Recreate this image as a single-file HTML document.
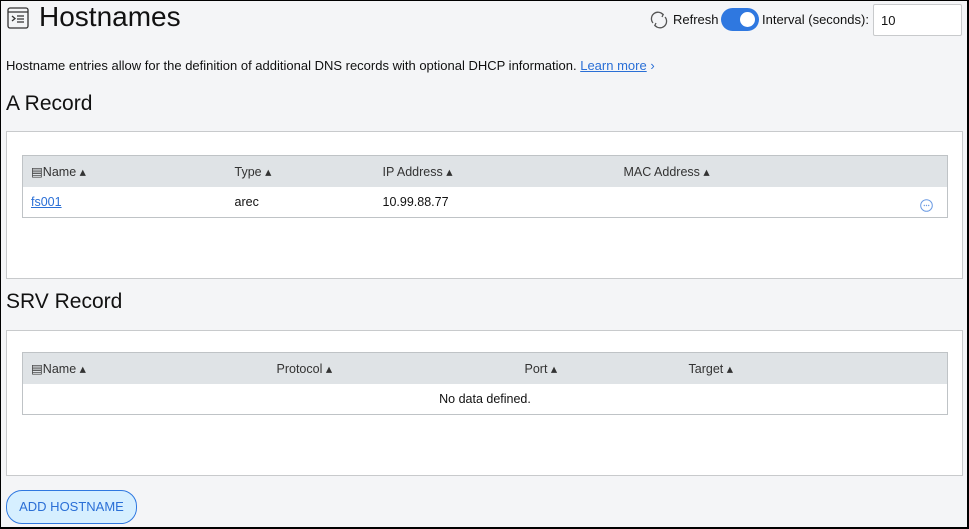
<!DOCTYPE html>
<html><head><style>
*{box-sizing:border-box;margin:0;padding:0}
body{width:969px;height:529px;background:#f4f5f7;font-family:"Liberation Sans",sans-serif;color:#111;position:relative;overflow:hidden}
.frame{position:absolute;left:0;top:0;width:969px;height:529px;border:1px solid #000;border-right-width:2px;border-bottom-width:2px;pointer-events:none}
.abs{position:absolute}
h1{position:absolute;left:40px;top:2px;font-size:28px;font-weight:400}
h2{position:absolute;left:7px;font-size:21px;font-weight:400}
.panel{position:absolute;left:6px;width:957px;background:#fff;border:1px solid #c8cacc}
table{position:absolute;left:15px;width:926px;border-collapse:collapse;border:1px solid #bfc3c6;font-size:12.5px}
th{background:#dfe3e6;text-align:left;font-weight:400;color:#333;height:31px;padding-left:8px}
td{height:31px;padding-left:8px}
.a{color:#2a6fd6;text-decoration:underline}
</style></head><body>
<svg class="abs" style="left:7px;top:7px" width="22" height="22" viewBox="0 0 22 22" fill="none" stroke="#333" stroke-width="1.3"><rect x="1" y="1" width="20" height="20" rx="2"/><line x1="1" y1="5" x2="21" y2="5"/><path d="M5 9l3 2.5-3 2.5M10 9h7M10 12h7M10 15h7"/></svg>
<h1 style="left:39px;top:1px">Hostnames</h1>
<svg class="abs" style="left:650px;top:11px" width="18" height="18" viewBox="0 0 18 18" fill="none" stroke="#555" stroke-width="1.3"><path d="M3 12A6.5 6.5 0 0 1 13 3.5M15 6a6.5 6.5 0 0 1-10 8.5"/><path d="M11 2l2.2 1.5L12 6M7 16l-2.2-1.5L6 12"/></svg>
<div class="abs" style="left:673px;top:12px;font-size:13px">Refresh</div>
<div class="abs" style="left:721px;top:8px;width:38px;height:23px;border-radius:12px;background:#2f78e0"><div style="position:absolute;right:4px;top:4px;width:15px;height:15px;border-radius:50%;background:#fff"></div></div>
<div class="abs" style="left:762px;top:12px;font-size:13px">Interval (seconds):</div>
<div class="abs" style="left:873px;top:4px;width:89px;height:32px;background:#fff;border:1px solid #c8cacc;border-radius:2px;font-size:13px;padding:8px 0 0 7px">10</div>
<div class="abs" style="left:6px;top:58px;font-size:13px">Hostname entries allow for the definition of additional DNS records with optional DHCP information. <span class="a">Learn more</span> <span style="color:#2a6fd6">&#x203A;</span></div>
<h2 style="left:6px;top:92px">A Record</h2>
<div class="panel" style="left:6px;top:131px;height:148px">
<table style="left:15px;top:23px"><tr><th style="width:204px">&#9636;Name ▴</th><th style="width:148px">Type ▴</th><th style="width:241px">IP Address ▴</th><th>MAC Address ▴</th></tr>
<tr><td class="a">fs001</td><td>arec</td><td>10.99.88.77</td><td style="text-align:right;padding-right:14px"><svg width="13" height="13" style="vertical-align:-9px" viewBox="0 0 13 13"><circle cx="6.5" cy="6.5" r="5.8" fill="none" stroke="#6c9be3"/><circle cx="4.3" cy="6.5" r=".7" fill="#6c9be3"/><circle cx="6.5" cy="6.5" r=".7" fill="#6c9be3"/><circle cx="8.7" cy="6.5" r=".7" fill="#6c9be3"/></svg></td></tr></table>
</div>
<h2 style="left:6px;top:290px">SRV Record</h2>
<div class="panel" style="left:6px;top:330px;height:146px">
<table style="left:15px;top:21px"><tr><th style="width:246px">&#9636;Name ▴</th><th style="width:248px">Protocol ▴</th><th style="width:164px">Port ▴</th><th>Target ▴</th></tr>
<tr><td colspan="4" style="text-align:center;padding:0">No data defined.</td></tr></table>
</div>
<div class="abs" style="left:6px;top:490px;width:131px;height:34px;border:1px solid #2f78e0;border-radius:16px;background:#d6efff;color:#2a6fd6;font-size:13px;text-align:center;line-height:32px">ADD HOSTNAME</div>
<div class="frame"></div>
</body></html>
